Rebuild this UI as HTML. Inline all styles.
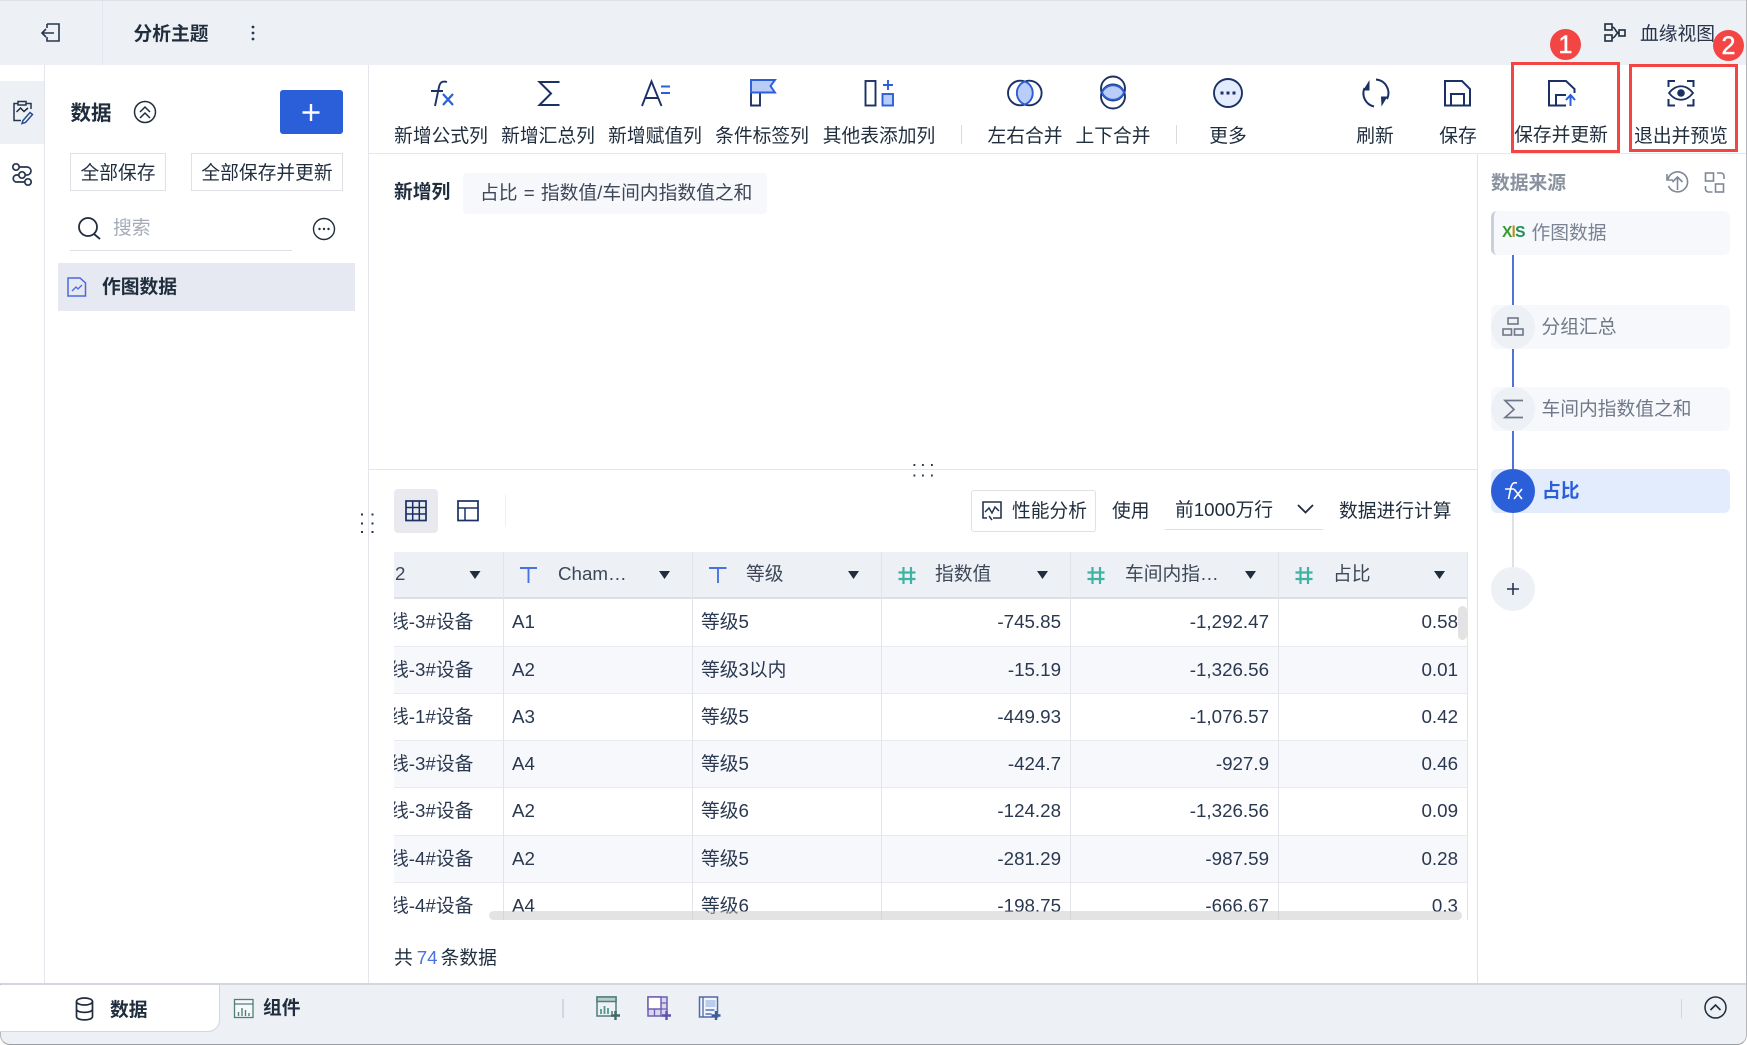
<!DOCTYPE html>
<html lang="zh-CN"><head><meta charset="utf-8"><title>分析主题</title>
<style>
html,body{margin:0;padding:0;width:1747px;height:1045px;overflow:hidden;background:#fff}
body{position:relative;font-family:"Liberation Sans","Noto Sans CJK SC",sans-serif;font-size:18.75px;color:#1f2d3d}
.t{position:absolute;height:30px;line-height:30px;white-space:nowrap}
.c{transform:translateX(-50%)}
.b{font-weight:700}
.x{position:absolute}
.btn{position:absolute;box-sizing:border-box;border:1px solid #dfe1e7;text-align:center;height:38px;line-height:37px;top:153px}
.rw{position:absolute;left:0;width:1074px;overflow:hidden}
.rw.alt{background:#f7f8fc}
.rw span{position:absolute;top:50%;margin-top:-15px;height:30px;line-height:30px;white-space:nowrap;color:#2a3850}
.a{left:-4px}.b1{left:118px}.c1{left:307px}
.d{right:407px}.e{right:199px}.f{right:10px}
.node{position:absolute;left:1491px;width:239px;height:44px;background:#f7f8fc;border-radius:6px}
</style></head><body>

<!-- top bar -->
<div class="x" style="left:0;top:0;width:1747px;height:65px;background:#edf0f5;border-top:1px solid #dfe3e8;box-sizing:border-box"></div>
<div class="x" style="left:102px;top:1px;width:1px;height:64px;background:#e3e6ec"></div>
<div class="t b" style="left:133.500px;top:19px">分析主题</div>
<div class="t" style="left:1640px;top:18.500px;color:#27344a">血缘视图</div>

<!-- left rail -->
<div class="x" style="left:0;top:81px;width:44px;height:63px;background:#edf0f5"></div>
<div class="x" style="left:44px;top:65px;width:1px;height:918px;background:#e4e6eb"></div>
<div class="x" style="left:368px;top:65px;width:1px;height:918px;background:#e4e6eb"></div>

<!-- data panel -->
<div class="t b" style="left:70.500px;top:99px;font-size:20.500px">数据</div>
<div class="x" style="left:280px;top:90px;width:63px;height:44px;background:#2b5fd9;border-radius:3px"></div>
<div class="btn" style="left:70px;width:96px">全部保存</div>
<div class="btn" style="left:191px;width:152px">全部保存并更新</div>
<div class="t" style="left:113px;top:213px;color:#a5acb8">搜索</div>
<div class="x" style="left:70px;top:250px;width:222px;height:1px;background:#dcdfe6"></div>
<div class="x" style="left:58px;top:263px;width:297px;height:48px;background:#e6e9f1"></div>
<div class="t b" style="left:102px;top:272px">作图数据</div>

<!-- toolbar -->
<div class="x" style="left:369px;top:153px;width:1378px;height:1px;background:#e6e7eb"></div>
<div class="t c" style="left:441px;top:121px">新增公式列</div>
<div class="t c" style="left:548px;top:121px">新增汇总列</div>
<div class="t c" style="left:655px;top:121px">新增赋值列</div>
<div class="t c" style="left:762px;top:121px">条件标签列</div>
<div class="t c" style="left:879px;top:121px">其他表添加列</div>
<div class="x" style="left:961px;top:125px;width:1px;height:19px;background:#d8dae0"></div>
<div class="t c" style="left:1025px;top:121px">左右合并</div>
<div class="t c" style="left:1113px;top:121px">上下合并</div>
<div class="x" style="left:1176px;top:125px;width:1px;height:19px;background:#d8dae0"></div>
<div class="t c" style="left:1228px;top:121px">更多</div>
<div class="t c" style="left:1375px;top:121px">刷新</div>
<div class="t c" style="left:1458px;top:121px">保存</div>
<div class="t c" style="left:1561px;top:120px">保存并更新</div>
<div class="t c" style="left:1681px;top:121px">退出并预览</div>

<!-- red highlights -->
<div class="x" style="left:1511px;top:62px;width:109px;height:91px;box-sizing:border-box;border:3px solid #f44545"></div>
<div class="x" style="left:1629px;top:64px;width:109px;height:88px;box-sizing:border-box;border:3px solid #f44545"></div>
<div class="x" style="left:1550px;top:29px;width:31px;height:31px;border-radius:50%;background:#f44545;color:#fff;text-align:center;line-height:32px;font-size:25px;-webkit-text-stroke:.5px #fff">1</div>
<div class="x" style="left:1713px;top:30px;width:31px;height:31px;border-radius:50%;background:#f44545;color:#fff;text-align:center;line-height:32px;font-size:25px;-webkit-text-stroke:.5px #fff">2</div>

<!-- formula -->
<div class="t b" style="left:394px;top:177px">新增列</div>
<div class="x" style="left:463px;top:173px;width:304px;height:41px;background:#f7f8fc;border-radius:4px"></div>
<div class="t" style="left:480px;top:178px;color:#3d4757;word-spacing:1px">占比 = 指数值/车间内指数值之和</div>
<div class="x" style="left:369px;top:469px;width:1108px;height:1px;background:#e4e6eb"></div>

<!-- table toolbar -->
<div class="x" style="left:394px;top:489px;width:44px;height:44px;background:#e8eaef;border-radius:4px"></div>
<div class="x" style="left:505px;top:495px;width:1px;height:32px;background:#eceef2"></div>
<div class="x" style="left:971px;top:490px;width:125px;height:42px;box-sizing:border-box;border:1px solid #dfe1e7;border-radius:3px"></div>
<div class="t" style="left:1012px;top:496px">性能分析</div>
<div class="t" style="left:1112px;top:496px">使用</div>
<div class="t" style="left:1175px;top:495px">前1000万行</div>
<div class="x" style="left:1165px;top:529px;width:158px;height:1px;background:#dcdfe6"></div>
<div class="t" style="left:1339px;top:496px">数据进行计算</div>

<!-- table -->
<div class="x" style="left:394px;top:552px;width:1074px;height:368px;overflow:hidden">
 <div class="x" style="left:0;top:0;width:1073px;height:45px;background:#edf0f5;border-bottom:1px solid #dcdfe7"></div>
 <div class="rw" style="top:47px;height:45px"><span class="a">线-3#设备</span><span class="b1">A1</span><span class="c1">等级5</span><span class="d">-745.85</span><span class="e">-1,292.47</span><span class="f">0.58</span></div>
 <div class="rw alt" style="top:94px;height:47px"><span class="a">线-3#设备</span><span class="b1">A2</span><span class="c1">等级3以内</span><span class="d">-15.19</span><span class="e">-1,326.56</span><span class="f">0.01</span></div>
 <div class="rw" style="top:141px;height:47px"><span class="a">线-1#设备</span><span class="b1">A3</span><span class="c1">等级5</span><span class="d">-449.93</span><span class="e">-1,076.57</span><span class="f">0.42</span></div>
 <div class="rw alt" style="top:188px;height:47px"><span class="a">线-3#设备</span><span class="b1">A4</span><span class="c1">等级5</span><span class="d">-424.7</span><span class="e">-927.9</span><span class="f">0.46</span></div>
 <div class="rw" style="top:235px;height:48px"><span class="a">线-3#设备</span><span class="b1">A2</span><span class="c1">等级6</span><span class="d">-124.28</span><span class="e">-1,326.56</span><span class="f">0.09</span></div>
 <div class="rw alt" style="top:283px;height:47px"><span class="a">线-4#设备</span><span class="b1">A2</span><span class="c1">等级5</span><span class="d">-281.29</span><span class="e">-987.59</span><span class="f">0.28</span></div>
 <div class="rw" style="top:330px;height:47px"><span class="a">线-4#设备</span><span class="b1">A4</span><span class="c1">等级6</span><span class="d">-198.75</span><span class="e">-666.67</span><span class="f">0.3</span></div>
 <!-- horizontal lines -->
 <div class="x" style="left:0;top:46px;width:1073px;height:1px;background:#dcdfe7"></div>
 <div class="x" style="left:0;top:94px;width:1073px;height:1px;background:#e8eaf0"></div>
 <div class="x" style="left:0;top:141px;width:1073px;height:1px;background:#e8eaf0"></div>
 <div class="x" style="left:0;top:188px;width:1073px;height:1px;background:#e8eaf0"></div>
 <div class="x" style="left:0;top:235px;width:1073px;height:1px;background:#e8eaf0"></div>
 <div class="x" style="left:0;top:283px;width:1073px;height:1px;background:#e8eaf0"></div>
 <div class="x" style="left:0;top:330px;width:1073px;height:1px;background:#e8eaf0"></div>
 <!-- column lines -->
 <div class="x" style="left:109px;top:0;width:1px;height:368px;background:#e2e4ea"></div>
 <div class="x" style="left:298px;top:0;width:1px;height:368px;background:#e2e4ea"></div>
 <div class="x" style="left:487px;top:0;width:1px;height:368px;background:#e2e4ea"></div>
 <div class="x" style="left:676px;top:0;width:1px;height:368px;background:#e2e4ea"></div>
 <div class="x" style="left:884px;top:0;width:1px;height:368px;background:#e2e4ea"></div>
 <div class="x" style="left:1073px;top:0;width:1px;height:368px;background:#e2e4ea"></div>
 <!-- header text -->
 <div class="t" style="left:1px;top:7px;color:#3d4757">2</div>
 <div class="t" style="left:164px;top:7px;color:#3d4757">Cham…</div>
 <div class="t" style="left:352px;top:7px;color:#3d4757">等级</div>
 <div class="t" style="left:541px;top:7px;color:#3d4757">指数值</div>
 <div class="t" style="left:731px;top:7px;color:#3d4757">车间内指…</div>
 <div class="t" style="left:939px;top:7px;color:#3d4757">占比</div>
 <!-- scrollbars -->
 <div class="x" style="left:95px;top:359px;width:973px;height:9px;background:rgba(200,200,200,.5);border-radius:5px"></div>
 <div class="x" style="left:1064px;top:54px;width:9px;height:34px;background:rgba(200,200,200,.5);border-radius:5px"></div>
</div>

<div class="t" style="left:394px;top:943px">共<span style="color:#4a72e0;margin:0 3px 0 4px">74</span>条数据</div>

<!-- right panel -->
<div class="x" style="left:1477px;top:154px;width:1px;height:829px;background:#e0e2e7"></div>
<div class="t b" style="left:1491px;top:168px;color:#8a929f">数据来源</div>
<div class="node" style="top:211px;box-sizing:border-box;border-left:3px solid #c9cfdb"></div>
<div class="t b" style="left:1502px;top:218px;font-size:15.500px;letter-spacing:-.8px"><span style="color:#3a9a2e">X</span><span style="color:#b8901f">l</span><span style="color:#1f8f5a">S</span></div>
<div class="t" style="left:1531.500px;top:218px;color:#7a8393">作图数据</div>
<div class="x" style="left:1512px;top:255px;width:2px;height:50px;background:#4f73d9"></div>
<div class="node" style="top:305px"></div>
<div class="t" style="left:1541.500px;top:312px;color:#6f7889">分组汇总</div>
<div class="x" style="left:1512px;top:349px;width:2px;height:38px;background:#4f73d9"></div>
<div class="node" style="top:387px"></div>
<div class="t" style="left:1541.500px;top:394px;color:#6f7889">车间内指数值之和</div>
<div class="x" style="left:1512px;top:431px;width:2px;height:38px;background:#4f73d9"></div>
<div class="node" style="top:469px;background:#e3ecfd"></div>
<div class="t b" style="left:1542px;top:476px;color:#2b5fd9">占比</div>
<div class="x" style="left:1512px;top:513px;width:2px;height:54px;background:#dfe1e7"></div>
<div class="x" style="left:1491px;top:305px;width:44px;height:44px;border-radius:50%;background:#edf0f5"></div>
<div class="x" style="left:1491px;top:387px;width:44px;height:44px;border-radius:50%;background:#edf0f5"></div>
<div class="x" style="left:1491px;top:469px;width:44px;height:44px;border-radius:50%;background:#2b5fd9"></div>
<div class="x" style="left:1491px;top:567px;width:44px;height:44px;border-radius:50%;background:#edf0f5"></div>

<!-- bottom bar -->
<div class="x" style="left:0;top:983px;width:1747px;height:62px;background:#edf0f5;border-top:2px solid #d3d6dd;border-bottom:1px solid #9a9da3;border-right:1px solid #b4b6ba;border-left:1px solid #b4b6ba;border-radius:0 0 10px 10px;box-sizing:border-box"></div>
<div class="x" style="left:0;top:985px;width:220px;height:47px;background:#fff;border-bottom:1px solid #d3d6dd;border-right:1px solid #d3d6dd;border-bottom-right-radius:12px;box-sizing:border-box"></div>
<div class="t b" style="left:110px;top:994.500px">数据</div>
<div class="t b" style="left:263px;top:993px">组件</div>
<div class="x" style="left:562px;top:999px;width:2px;height:19px;background:#d3d6dd"></div>
<div class="x" style="left:1681px;top:999px;width:1px;height:19px;background:#d3d6dd"></div>
<div class="x" style="left:1746px;top:0;width:1px;height:1035px;background:#b4b6ba"></div>

<!-- icons -->
<svg class="x" style="left:0;top:0" width="1747" height="1045" viewBox="0 0 1747 1045" fill="none" stroke-linecap="butt" stroke-linejoin="miter">
<!-- back -->
<g stroke="#26364f" stroke-width="1.6"><path d="M47 24H59V41H47V37M47 28V24"/><path d="M54 33H42M46 29l-4 4 4 4"/></g>
<circle cx="253" cy="27" r="1.4" fill="#26364f"/><circle cx="253" cy="33" r="1.4" fill="#26364f"/><circle cx="253" cy="39" r="1.4" fill="#26364f"/>
<!-- lineage -->
<g stroke="#1f2d3d" stroke-width="1.6"><rect x="1605" y="24" width="7" height="6"/><rect x="1605" y="35" width="7" height="6"/><rect x="1619" y="30" width="6" height="6"/><path d="M1612 27c4 0 3 6 7 6M1612 38c4 0 3-5 7-5"/></g>
<!-- rail -->
<g stroke="#26364f" stroke-width="1.5"><path d="M18 103.500H14V120.500H21M26 103.500H31V109"/><rect x="18" y="101.500" width="8" height="3.500" fill="#edf0f5"/><path d="M16.500 112l4-4 3.500 3.500 4-3.500" stroke="#1f2d3d"/><path d="M23 120.500l7-8 2.500 2-7 8-3.500 1z" stroke="#2b4d8f" fill="#edf0f5"/></g>
<g stroke="#26364f" stroke-width="1.7"><circle cx="16" cy="167" r="3.200"/><circle cx="22" cy="175" r="3.200"/><circle cx="28" cy="182" r="3.200"/><path d="M19 167h8a4 4 0 0 1 0 8h-2M19 175h-3a3.600 3.600 0 0 0 0 7h9"/></g>
<!-- data header -->
<circle cx="145" cy="112" r="10.500" stroke="#1f2d3d" stroke-width="1.500"/><path d="M140 112l5-5 5 5M140 118l5-5 5 5" stroke="#1f2d3d" stroke-width="1.500"/>
<path d="M311 104v17M302.500 112.500h17" stroke="#fff" stroke-width="2.400"/>
<circle cx="88" cy="227" r="9" stroke="#1f2d3d" stroke-width="1.800"/><path d="M94 234l6 5" stroke="#1f2d3d" stroke-width="1.800"/>
<circle cx="324" cy="229" r="10.500" stroke="#1f2d3d" stroke-width="1.400"/><circle cx="319.500" cy="229" r="1.200" fill="#1f2d3d"/><circle cx="324" cy="229" r="1.200" fill="#1f2d3d"/><circle cx="328.500" cy="229" r="1.200" fill="#1f2d3d"/>
<path d="M68 278H80L85.500 283V296H68Z" stroke="#4a68e0" stroke-width="1.500"/><path d="M72 291l4-4 2 2 4-4" stroke="#4a68e0" stroke-width="1.300"/>
<!-- fx -->
<path d="M447 82c-5-1.500-7 .5-8 5l-4 19M431 91h12" stroke="#1b3065" stroke-width="1.900"/><path d="M443 94l10 11M453 94l-10 11" stroke="#2b5fd9" stroke-width="2.200"/>
<!-- sigma -->
<path d="M559.500 82H539.500L551 93.500 539.500 105H559.500" stroke="#1b3065" stroke-width="2"/>
<!-- A= -->
<path d="M642 106L651.500 81.500 661.500 106M645 98H659" stroke="#1b3065" stroke-width="1.900"/><path d="M661 86.500h9M661 93h9" stroke="#2b5fd9" stroke-width="2"/>
<!-- flag -->
<path d="M751 93V105.500H760V93" stroke="#1b3065" stroke-width="1.900"/><path d="M751 80H775L770.500 86 775 92.500H751Z" fill="#b9cdf7" stroke="#2b5fd9" stroke-width="1.900"/>
<!-- other table -->
<rect x="865.500" y="81" width="10" height="24.500" stroke="#1b3065" stroke-width="1.900"/><path d="M888 80v10M883 85h10" stroke="#2b5fd9" stroke-width="1.900"/><rect x="882.500" y="94" width="10.500" height="11.500" fill="#b9cdf7" stroke="#2b5fd9" stroke-width="1.900"/>
<!-- lr merge -->
<circle cx="1020.300" cy="93" r="12.300" stroke="#1b3065" stroke-width="1.900"/><circle cx="1029.300" cy="93" r="12.300" stroke="#1b3065" stroke-width="1.900"/>
<path d="M1024.800 81.500a12.300 12.300 0 0 1 0 23 12.300 12.300 0 0 1 0-23Z" fill="#b9cdf7" stroke="#2b5fd9" stroke-width="1.900"/>
<!-- ud merge -->
<circle cx="1113" cy="88.500" r="12" stroke="#1b3065" stroke-width="1.900"/><circle cx="1113" cy="96.500" r="12" stroke="#1b3065" stroke-width="1.900"/>
<path d="M1102 92.500a12 12 0 0 1 22 0 12 12 0 0 1-22 0Z" fill="#b9cdf7" stroke="#2b5fd9" stroke-width="1.900"/>
<!-- more -->
<circle cx="1228" cy="93" r="14" fill="#e3ecfd" stroke="#1b3065" stroke-width="1.900"/><path d="M1220.500 91.500h3v3h-3zM1226.500 91.500h3v3h-3zM1232.500 91.500h3v3h-3z" fill="#1b3065"/>
<!-- refresh -->
<path d="M1364.500 88A13.500 13.500 0 0 0 1374 106.500M1376 79.500A13.500 13.500 0 0 1 1387 99" stroke="#1b3065" stroke-width="2"/><path d="M1363 90.500L1369.500 80V90.500Z" fill="#1b3065"/><path d="M1381 96.500H1387.500L1381.500 106.500Z" fill="#1b3065"/>
<!-- save -->
<path d="M1445 81H1462L1470 89V105.500H1445Z" stroke="#1b3065" stroke-width="2"/><path d="M1451 105V94H1464V105" stroke="#1b3065" stroke-width="2"/>
<!-- save update -->
<path d="M1566 105.500H1549V81H1566L1574.500 89V93M1556 105V95H1566" stroke="#1b3065" stroke-width="2"/><path d="M1570.500 106V95M1566 100l4.500-5 4.500 5" stroke="#2b5fd9" stroke-width="2"/>
<!-- preview -->
<path d="M1668.500 87V81H1675M1687 81H1693.500V87M1668.500 99V105.500H1675M1687 105.500H1693.500V99" stroke="#1b3065" stroke-width="2"/><path d="M1669 93c7-9 17-9 24 0-7 9-17 9-24 0Z" stroke="#1b3065" stroke-width="1.800"/><circle cx="1681" cy="93" r="3.800" fill="#1b3065"/>
<!-- view icons -->
<rect x="406" y="501" width="20" height="19.500" stroke="#1b3065" stroke-width="1.700"/><path d="M412.700 501v19.500M419.300 501v19.500M406 507.500h20M406 514h20" stroke="#1b3065" stroke-width="1.500"/>
<rect x="458" y="501" width="20" height="19.500" stroke="#1b3065" stroke-width="1.700"/><path d="M458 508h20M465 508v12.500" stroke="#1b3065" stroke-width="1.500"/>
<!-- drag dots -->
<g fill="#26364f"><rect x="913.500" y="464" width="1.800" height="2"/><rect x="922" y="464" width="1.800" height="2"/><rect x="931" y="464" width="1.800" height="2"/><rect x="913.500" y="474.500" width="1.800" height="2"/><rect x="922" y="474.500" width="1.800" height="2"/><rect x="931" y="474.500" width="1.800" height="2"/>
<rect x="361" y="513.500" width="2" height="2"/><rect x="371.500" y="513.500" width="2" height="2"/><rect x="361" y="522.500" width="2" height="2"/><rect x="371.500" y="522.500" width="2" height="2"/><rect x="361" y="531" width="2" height="2"/><rect x="371.500" y="531" width="2" height="2"/></g>
<!-- performance -->
<path d="M987 518H983V502H1001V518H993" stroke="#26364f" stroke-width="1.600"/><path d="M985 512l4-4 3 5 3-6 4 4M989 516l3 4" stroke="#26364f" stroke-width="1.500"/>
<path d="M1298 505l7.500 7.500 7.500-7.500" stroke="#1f2d3d" stroke-width="1.800"/>
<!-- header T and # icons -->
<g stroke="#4a72e0" stroke-width="1.900"><path d="M520 568H537M528.500 568V583"/><path d="M709 568H726.500M718 568V583"/></g>
<g stroke="#3fb3a3" stroke-width="2.200"><path d="M903.500 567v17M911 567v17M898.500 572.500h17M898.500 579h17"/><path d="M1092.500 567v17M1100 567v17M1087.500 572.500h17M1087.500 579h17"/><path d="M1300.500 567v17M1308 567v17M1295.500 572.500h17M1295.500 579h17"/></g>
<g fill="#1f2d3d"><path d="M469.500 571h11l-5.500 8z"/><path d="M659 571h11l-5.500 8z"/><path d="M848 571h11l-5.500 8z"/><path d="M1037 571h11l-5.500 8z"/><path d="M1245 571h11l-5.500 8z"/><path d="M1434 571h11l-5.500 8z"/></g>
<!-- right panel icons -->
<g stroke="#7f8896" stroke-width="1.600"><path d="M1668 179a10 10 0 1 1 .5 7M1667 174v6h6"/><path d="M1677.500 190V177M1672.500 182l5-5 5 5"/>
<rect x="1705.500" y="173" width="8" height="8"/><rect x="1715.500" y="184" width="8" height="8"/><path d="M1717 173h4a3 3 0 0 1 3 3v3M1712.500 192h-4a3 3 0 0 1-3-3v-3"/></g>
<g stroke="#6f7889" stroke-width="1.600"><rect x="1508" y="318" width="10" height="6"/><rect x="1503" y="329" width="8.500" height="6"/><rect x="1514.500" y="329" width="8.500" height="6"/></g>
<path d="M1523 400.500H1505L1514 409.500 1505 417.500H1523" stroke="#6f7889" stroke-width="1.700"/>
<path d="M1517 483c-3.500-1-5 .5-6 4l-2.500 12M1505 489h9" stroke="#fff" stroke-width="1.600"/><path d="M1514 489l8 10M1522 489l-8 10" stroke="#fff" stroke-width="1.600"/>
<path d="M1513 583v12M1507 589h12" stroke="#26364f" stroke-width="1.600"/>
<!-- bottom icons -->
<g stroke="#1f2d3d" stroke-width="1.700"><ellipse cx="84.500" cy="1001.500" rx="8" ry="3.500"/><path d="M76.500 1001.500v15c0 4.500 16 4.500 16 0v-15M76.500 1009c0 4.500 16 4.500 16 0"/></g>
<rect x="234.500" y="999.500" width="18.500" height="18" fill="#f6f8f9" stroke="#4f7f78" stroke-width="1.300"/><path d="M234.500 1004h18.500" stroke="#4f7f78" stroke-width="1.300"/><path d="M238.500 1016v-4M242 1016v-8M245.500 1016v-6M249 1016v-3" stroke="#4f7f78" stroke-width="1.400"/>
<rect x="597" y="997" width="19" height="19" stroke="#4f7f78" stroke-width="1.500"/><rect x="597" y="997" width="19" height="4.500" fill="#b7cfc8" stroke="#4f7f78" stroke-width="1.500"/><path d="M601 1014v-5M604.500 1014v-8M608 1014v-6M612 1014v-3" stroke="#4f9a90" stroke-width="1.800"/><path d="M615.500 1011v9M611 1015.500h9" stroke="#3f6a68" stroke-width="2.400"/>
<rect x="648" y="997" width="19" height="19" fill="#d9d6ee" stroke="#6d5fb4" stroke-width="1.500"/><rect x="648" y="997" width="13" height="12" fill="#fff" stroke="#6d5fb4" stroke-width="1.500"/><path d="M661 1003h6M654.500 1009v7M661 1009v7M661 1009h6" stroke="#6d5fb4" stroke-width="1.300"/><path d="M666.500 1011v9M662 1015.500h9" stroke="#5f54b0" stroke-width="2.400"/>
<rect x="699.500" y="997" width="18" height="20" fill="#f3f5fa" stroke="#4f6aa8" stroke-width="1.500"/><path d="M703 997v20" stroke="#4f6aa8" stroke-width="1.300"/><rect x="705.500" y="1000" width="10" height="7" fill="#b9cdf0"/><path d="M705.500 1010h9M705.500 1014h6" stroke="#4a72c8" stroke-width="1.500"/><path d="M716 1011v9M711.500 1015.500h9" stroke="#3f5e98" stroke-width="2.400"/>
<ellipse cx="1715.500" cy="1007.500" rx="10.500" ry="10.500" stroke="#1f2d3d" stroke-width="1.500"/><path d="M1710.500 1010l5-5 5 5" stroke="#1f2d3d" stroke-width="1.600"/>
</svg>
</body></html>
